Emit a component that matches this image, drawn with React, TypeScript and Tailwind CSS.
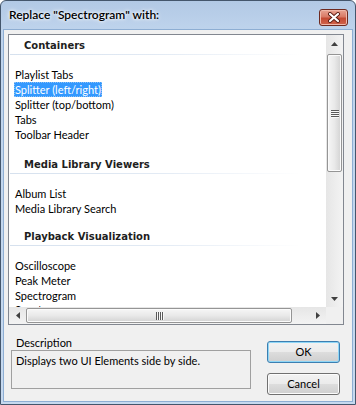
import React from "react";

const groups = [
  {
    title: "Containers",
    gap: "mt-[3px]",
    items: ["Playlist Tabs", "Splitter (left/right)", "Splitter (top/bottom)", "Tabs", "Toolbar Header"],
  },
  {
    title: "Media Library Viewers",
    gap: "mt-[15px]",
    items: ["Album List", "Media Library Search"],
  },
  {
    title: "Playback Visualization",
    gap: "mt-[13px]",
    items: ["Oscilloscope", "Peak Meter", "Spectrogram", "Spectrum"],
  },
];

const selected = "Splitter (left/right)";

function Arrow({ dir }: { dir: "up" | "down" | "left" | "right" }) {
  const pts =
    dir === "up"
      ? "0,4 7,4 3.5,0"
      : dir === "down"
      ? "0,0 7,0 3.5,4"
      : dir === "left"
      ? "4,0 4,7 0,3.5"
      : "0,0 0,7 4,3.5";
  const w = dir === "up" || dir === "down" ? 7 : 4;
  const h = dir === "up" || dir === "down" ? 4 : 7;
  return (
    <svg width={w} height={h} viewBox={`0 0 ${w} ${h}`}>
      <polygon points={pts} fill="#404040" />
    </svg>
  );
}

function CloseButton() {
  return (
    <div className="mt-[8px] mr-[7px] w-[29px] h-[17px] rounded-[3px] border border-[#6e2a20] bg-[linear-gradient(to_bottom,#e8a493_0%,#d97a66_45%,#c44a33_55%,#d0644c_100%)] shadow-[inset_0_0_0_1px_#f0b8aa] flex items-center justify-center">
      <svg width="14" height="11" viewBox="0 0 14 11">
        <path d="M3 2 L11 9 M11 2 L3 9" stroke="#5b1d14" strokeWidth="4" strokeLinecap="round" />
        <path d="M3 2 L11 9 M11 2 L3 9" stroke="#ffffff" strokeWidth="2.2" strokeLinecap="round" />
      </svg>
    </div>
  );
}

function Button({ label, isDefault }: { label: string; isDefault?: boolean }) {
  return (
    <div
      className={`w-[73px] h-[22px] rounded-[3px] border flex items-center justify-center text-[11px] text-black bg-[linear-gradient(to_bottom,#f2f2f2_0%,#ebebeb_50%,#dddddd_50%,#cfcfcf_100%)] ${
        isDefault
          ? "border-[#3c7fb1] shadow-[inset_0_0_0_1px_#8fd6f6]"
          : "border-[#707070] shadow-[inset_0_0_0_1px_#fcfcfc]"
      }`}
    >
      {label}
    </div>
  );
}

function Grip({ vertical }: { vertical?: boolean }) {
  const lines = [0, 1, 2, 3];
  return vertical ? (
    <div className="flex flex-col gap-[1px]">
      {lines.map((i) => (
        <div key={i} className="w-[8px] h-[1px] bg-[#5a5a5a] shadow-[0_1px_0_#f8f8f8]" />
      ))}
    </div>
  ) : (
    <div className="flex flex-row gap-[1px]">
      {lines.map((i) => (
        <div key={i} className="w-[1px] h-[8px] bg-[#5a5a5a] shadow-[1px_0_0_#f8f8f8]" />
      ))}
    </div>
  );
}

export default function App() {
  return (
    <div className="w-[356px] h-[405px] flex flex-col border border-[#44566c] rounded-t-[6px] bg-[linear-gradient(to_bottom,#b2c9e5_0px,#bed3ec_28px,#c6d9ef_100%)] font-['Lato','Noto_Sans',sans-serif] text-[11px] text-black overflow-hidden">
      {/* title bar */}
      <div className="h-[28px] flex flex-row justify-between items-start">
        <div className="pl-[8px] mt-[6px] leading-[16px] text-[12px] font-semibold [text-shadow:0_0_5px_#ffffff,0_0_3px_#ffffff]">
          Replace "Spectrogram" with:
        </div>
        <CloseButton />
      </div>

      {/* client */}
      <div className="mx-[2px] mb-[2px] flex-1 border border-[#8eaed3] bg-[#f0f0f0] flex flex-col">
        {/* list box */}
        <div className="ml-[4px] mt-[4px] w-[336px] h-[291px] border border-[#828790] bg-white grid grid-cols-[317px_17px] grid-rows-[272px_17px]">
          <div className="overflow-hidden">
            {groups.map((g) => (
              <div key={g.title} className={g.gap}>
                <div className="h-[16px] leading-[16px] pl-[15px] font-['DejaVu_Sans',sans-serif] font-bold text-[10px] text-[#1e1e1e]">
                  {g.title}
                </div>
                <div className="ml-[1px] w-[292px] h-[1px] bg-linear-to-r from-[#d6e1ee] via-[#e2eaf4] to-transparent" />
                <div className="mt-[12px] flex flex-col">
                  {g.items.map((it) => (
                    <div
                      key={it}
                      className={`h-[15px] leading-[15px] pl-[5px] ${it === "Spectrum" ? "-mt-[1px]" : ""}`}
                    >
                      <span
                        className={`inline-block px-[1px] ${
                          it === selected
                            ? "bg-[#3399ff] text-white outline-1 outline-dotted outline-[#8cc0f4] -outline-offset-1"
                            : ""
                        }`}
                      >
                        {it}
                      </span>
                    </div>
                  ))}
                </div>
              </div>
            ))}
          </div>

          {/* vertical scrollbar */}
          <div className="flex flex-col bg-linear-to-r from-[#e6e6e6] to-[#f3f3f3]">
            <div className="h-[17px] flex items-center justify-center">
              <Arrow dir="up" />
            </div>
            <div className="flex-1">
              <div className="mt-[2px] mx-auto w-[15px] h-[118px] rounded-[2px] border border-[#959595] bg-linear-to-r from-[#f6f6f6] via-[#e9e9e9] to-[#d2d2d2] shadow-[inset_0_0_0_1px_#fbfbfb] flex items-center justify-center">
                <Grip vertical />
              </div>
            </div>
            <div className="h-[17px] flex items-center justify-center">
              <Arrow dir="down" />
            </div>
          </div>

          {/* horizontal scrollbar */}
          <div className="flex flex-row bg-linear-to-b from-[#e6e6e6] to-[#f3f3f3]">
            <div className="w-[17px] flex items-center justify-center">
              <Arrow dir="left" />
            </div>
            <div className="flex-1 flex flex-row">
              <div className="my-auto w-[266px] h-[15px] rounded-[2px] border border-[#959595] bg-linear-to-b from-[#f6f6f6] via-[#e9e9e9] to-[#d2d2d2] shadow-[inset_0_0_0_1px_#fbfbfb] flex items-center justify-center">
                <Grip />
              </div>
            </div>
            <div className="w-[17px] flex items-center justify-center">
              <Arrow dir="right" />
            </div>
          </div>
          <div className="bg-[#f0f0f0]" />
        </div>

        {/* bottom section */}
        <div className="flex flex-row">
          <div className="ml-[7px] mt-[10px] w-[240px] flex flex-col">
            <div className="pl-[5px] leading-[15px]">Description</div>
            <div className="h-[39px] border border-[#a0a0a0] pl-[4px] pt-[2px] leading-[15px]">
              Displays two UI Elements side by side.
            </div>
          </div>
          <div className="ml-[16px] mt-[16px] flex flex-col gap-[10px]">
            <Button label="OK" isDefault />
            <Button label="Cancel" />
          </div>
        </div>
      </div>
    </div>
  );
}
